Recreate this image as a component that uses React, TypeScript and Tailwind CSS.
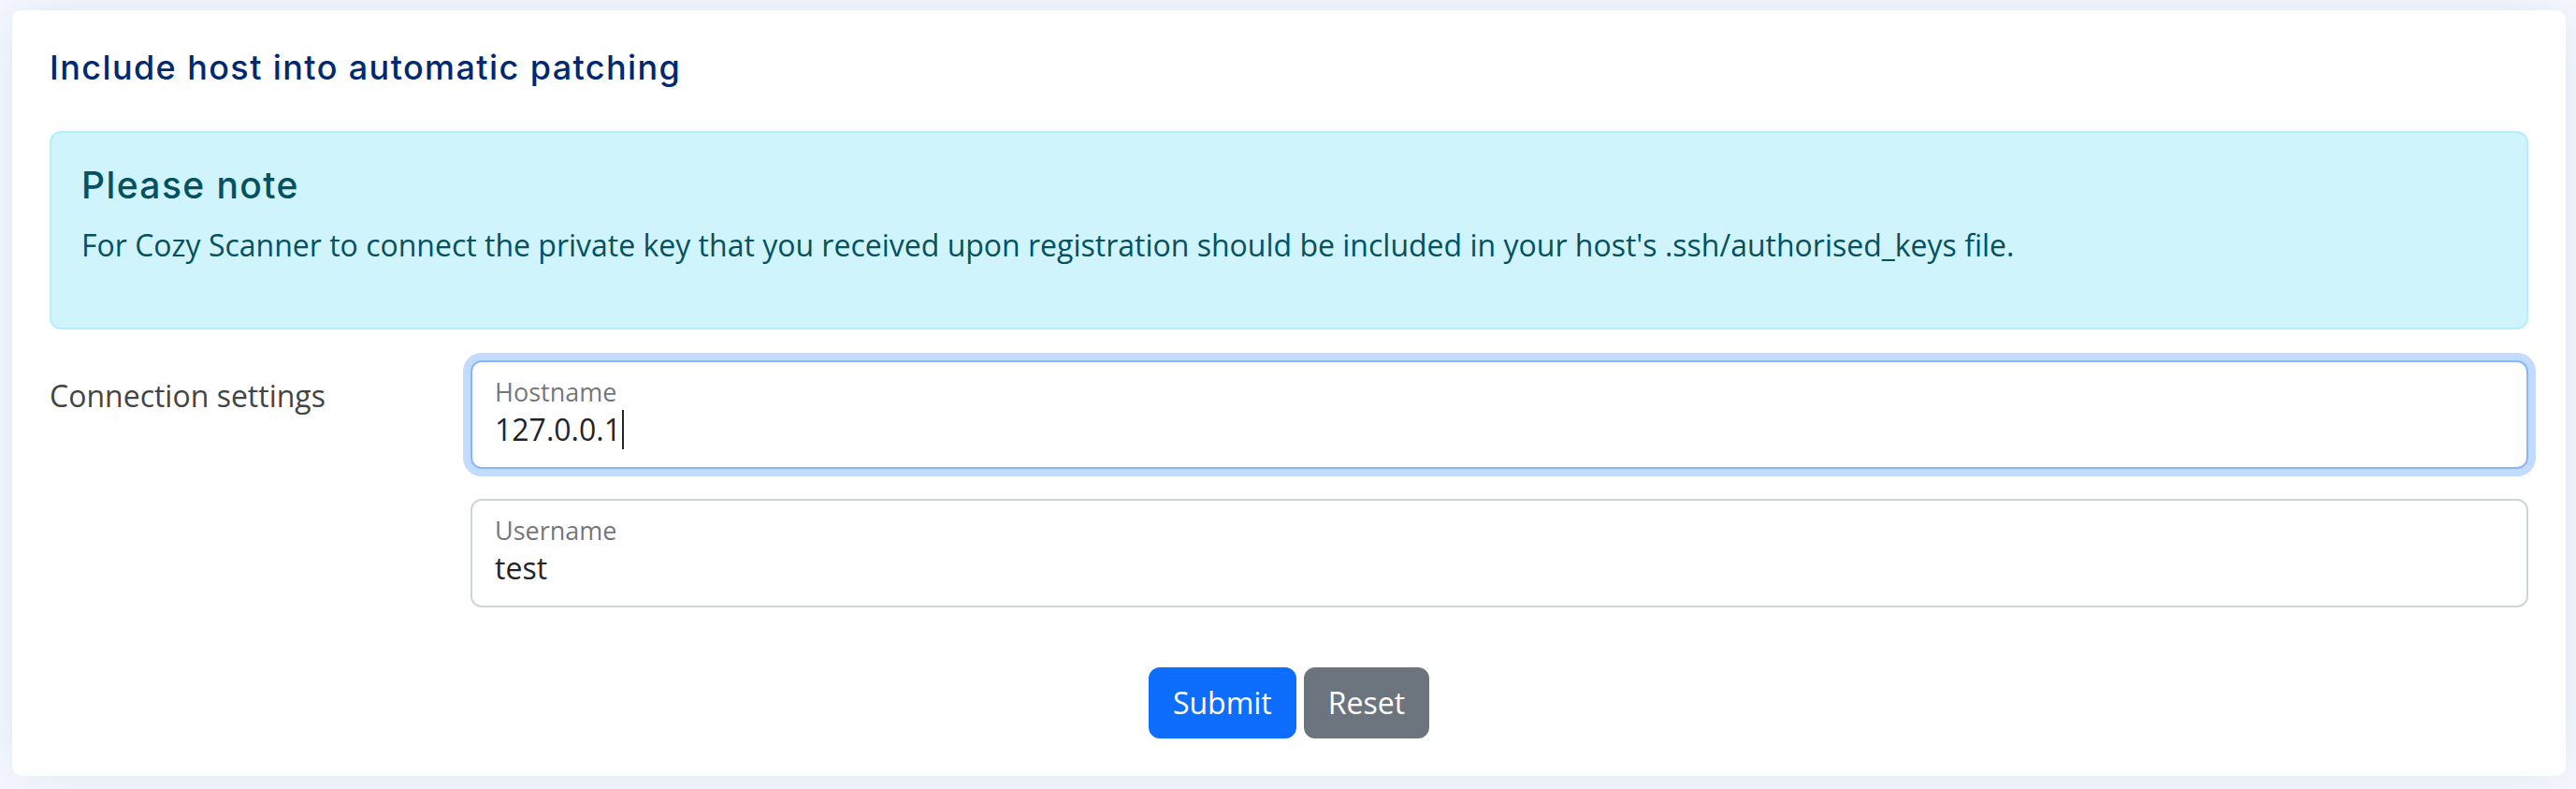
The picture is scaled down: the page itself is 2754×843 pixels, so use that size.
export default function App() {
  return (
    <main className="min-h-[843px] bg-[#f6f9ff] pb-[15px] pl-[13px] pr-[11px] pt-[11px] font-['Open_Sans',sans-serif]">
      <section className="rounded-[10px] bg-white px-[40px] pb-[40px] shadow-[0_0_60px_rgba(1,41,112,0.1)]">
        <h5 className="mb-[16px] pb-[30px] pt-[40px] font-['Inter',sans-serif] text-[36px] font-medium leading-[1.2] tracking-[1.4px] text-[#012970]">
          Include host into automatic patching
        </h5>

        <div className="mb-[33px] rounded-[12px] border-2 border-[#b6effb] bg-[#cff4fc] p-[32px] text-[#055160]">
          <h4 className="mb-[16px] font-['Inter',sans-serif] text-[39px] font-medium leading-[48px] tracking-[1.4px]">
            Please note
          </h4>
          <p className="mb-[32px] text-[32px] leading-[48px]">
            For Cozy Scanner to connect the private key that you received upon registration should be included in
            your host's .ssh/authorised_keys file.
          </p>
        </div>

        <form>
          <div className="mb-[32px] flex">
            <label className="w-[450px] shrink-0 pt-[14px] text-[32px] leading-[48px] text-[#444444]">
              Connection settings
            </label>
            <div className="flex flex-1 flex-col gap-[32px]">
              <div className="h-[116px] rounded-[12px] border-2 border-[#86b7fe] bg-white px-[24px] pt-[16px] shadow-[0_0_0_8px_rgba(13,110,253,0.25)]">
                <div className="text-[27px] leading-[32px] text-[#212529a6]">Hostname</div>
                <div className="flex items-center text-[32px] leading-[48px] text-[#212529]">
                  127.0.0.1
                  <span className="ml-[1px] inline-block h-[42px] w-[2px] bg-[#212529]" />
                </div>
              </div>
              <div className="h-[116px] rounded-[12px] border-2 border-[#ced4da] bg-white px-[24px] pt-[16px]">
                <div className="text-[27px] leading-[32px] text-[#212529a6]">Username</div>
                <div className="text-[32px] leading-[48px] text-[#212529]">test</div>
              </div>
            </div>
          </div>

          <div className="flex justify-center gap-[8px] pt-[32px]">
            <button
              className="rounded-[12px] border-2 border-[#0d6efd] bg-[#0d6efd] px-[24px] py-[12px] text-[32px] leading-[48px] text-white"
              type="button"
            >
              Submit
            </button>
            <button
              className="rounded-[12px] border-2 border-[#6c757d] bg-[#6c757d] px-[24px] py-[12px] text-[32px] leading-[48px] text-white"
              type="button"
            >
              Reset
            </button>
          </div>
        </form>
      </section>
    </main>
  );
}
